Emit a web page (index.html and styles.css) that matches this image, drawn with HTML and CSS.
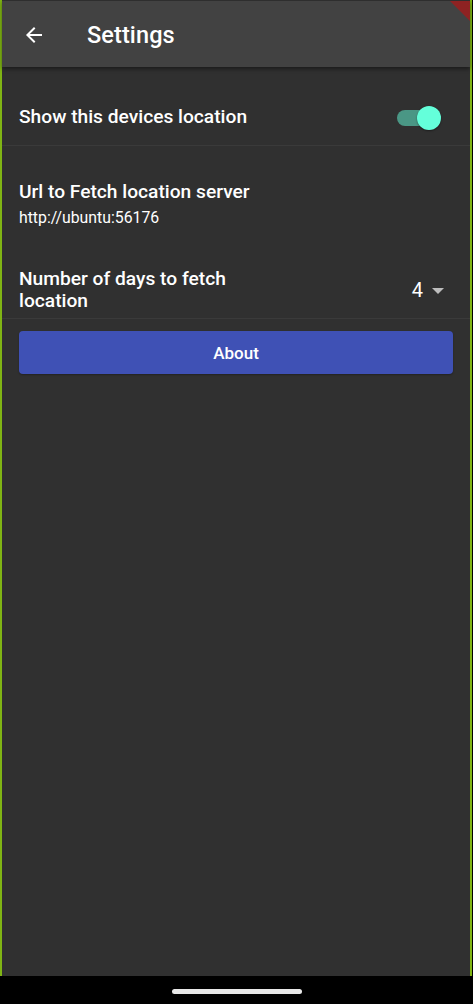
FILE: index.html
```html
<!DOCTYPE html>
<html>
<head>
<meta charset="utf-8">
<link rel="stylesheet" href="styles.css">
</head>
<body>
<div class="screen">
  <div class="frame">
    <header class="appbar">
      <svg class="back" width="24" height="24" viewBox="0 0 24 24"><path fill="#fff" d="M20 11H7.83l5.59-5.59L12 4l-8 8 8 8 1.41-1.41L7.83 13H20v-2z"/></svg>
      <h1 class="title">Settings</h1>
      <div class="banner"></div>
    </header>
    <main class="content">
      <div class="row row-switch">
        <span class="label">Show this devices location</span>
        <div class="switch"><div class="track"></div><div class="thumb"></div></div>
      </div>
      <div class="row row-url">
        <span class="label">Url to Fetch location server</span>
        <span class="sub">http://ubuntu:56176</span>
      </div>
      <div class="row row-days">
        <span class="label narrow">Number of days to fetch location</span>
        <div class="dropdown"><span class="val">4</span><span class="caret"></span></div>
      </div>
      <button class="about">About</button>
    </main>
  </div>
  <div class="navbar"><div class="pill"></div></div>
</div>
</body>
</html>
```

FILE: styles.css
```css
html, body {
  margin: 0;
  padding: 0;
  background: #000;
}
body {
  font-family: Roboto, "Liberation Sans", sans-serif;
  color: #fff;
  width: 473px;
  height: 1004px;
  overflow: hidden;
}
.screen {
  display: flex;
  flex-direction: column;
  height: 1004px;
}
.frame {
  height: 976px;
  width: 468px;
  border-left: 2px solid #7fb414;
  border-right: 2px solid #7fb414;
  background: #303030;
  display: flex;
  flex-direction: column;
  box-sizing: content-box;
}
.appbar {
  position: relative;
  height: 67px;
  background: #424242;
  border-top: 1px solid #2e2e2e;
  box-sizing: border-box;
  display: flex;
  align-items: center;
  box-shadow: 0 2px 4px rgba(0,0,0,0.45);
  z-index: 2;
  overflow: hidden;
}
.back {
  margin-left: 20px;
  margin-top: 2px;
}
.title {
  margin: 2px 0 0 41px;
  font-size: 23.5px;
  font-weight: 500;
  letter-spacing: 0.1px;
}
.banner {
  position: absolute;
  top: -1px;
  right: -1px;
  width: 0;
  height: 0;
  border-top: 22px solid #8e2222;
  border-left: 22px solid transparent;
}
.content {
  display: flex;
  flex-direction: column;
  padding: 21px 17px 0 17px;
}
.row {
  display: flex;
  align-items: center;
}
.label {
  font-size: 19.2px;
  font-weight: 500;
  line-height: 22px;
}
.row-switch {
  height: 57px;
  justify-content: space-between;
  border-bottom: 1px solid #3a3a3a;
  margin: 0 -17px;
  padding: 0 17px;
}
.switch {
  position: relative;
  width: 46px;
  height: 28px;
  margin-right: 8px;
}
.track {
  position: absolute;
  left: -2px;
  top: 7px;
  width: 36px;
  height: 16px;
  border-radius: 8px;
  background: #4a9785;
}
.thumb {
  position: absolute;
  left: 18px;
  top: 3px;
  width: 24px;
  height: 24px;
  border-radius: 50%;
  background: #64ffda;
  box-shadow: 0 1px 2px rgba(0,0,0,0.4);
}
.row-url {
  flex-direction: column;
  align-items: flex-start;
  padding-top: 35px;
  height: 86px;
  box-sizing: border-box;
}
.row-url .label {
  margin-bottom: 6px;
}
.sub {
  font-size: 15.8px;
  line-height: 18px;
}
.row-days {
  justify-content: space-between;
  height: 87px;
  box-sizing: border-box;
  padding-top: 30px;
  border-bottom: 1px solid #3a3a3a;
  margin: 0 -17px;
  padding-left: 17px;
  padding-right: 26px;
}
.narrow {
  width: 245px;
}
.dropdown {
  display: flex;
  align-items: center;
  gap: 9px;
}
.val {
  font-size: 20px;
  line-height: 22px;
}
.caret {
  width: 0;
  height: 0;
  border-left: 6px solid transparent;
  border-right: 6px solid transparent;
  border-top: 6px solid #bdbdbd;
  margin-top: 1px;
}
.about {
  margin-top: 12px;
  height: 43px;
  border: none;
  border-radius: 4px;
  background: #3f51b5;
  color: #fff;
  font-family: Roboto, "Liberation Sans", sans-serif;
  font-size: 17px;
  font-weight: 500;
  box-shadow: 0 1px 2px rgba(0,0,0,0.3);
}
.navbar {
  height: 28px;
  background: #000;
  display: flex;
  justify-content: center;
  align-items: center;
}
.pill {
  width: 130px;
  height: 5px;
  border-radius: 3px;
  background: #e8e8e8;
  margin-left: 1px;
  margin-top: 2px;
}
```
